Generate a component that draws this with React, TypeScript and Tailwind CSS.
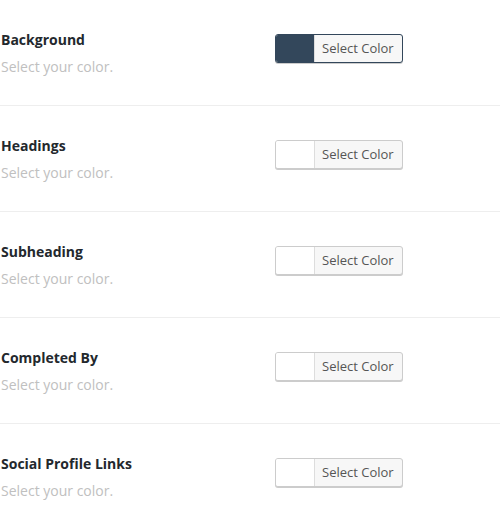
const rows = [
  { label: "Background", color: "#33475b" },
  { label: "Headings", color: "#ffffff" },
  { label: "Subheading", color: "#ffffff" },
  { label: "Completed By", color: "#ffffff" },
  { label: "Social Profile Links", color: "#ffffff" },
];

function ColorButton({ color, active }: { color: string; active?: boolean }) {
  return (
    <button
      className={
        "flex h-[29px] overflow-hidden rounded-[3px] border bg-[#f7f7f7] shadow-[0_1px_0_#cccccc] " +
        (active ? "border-[#33475b]" : "border-[#cccccc]")
      }
    >
      <span className="block h-full w-[38px]" style={{ background: color }} />
      <span className="flex h-full items-center border-l border-[#dddddd] pl-[7px] pr-[8px] text-[13px] text-[#555555]">
        Select Color
      </span>
    </button>
  );
}

export default function App() {
  return (
    <div className="w-[500px] bg-white" style={{ fontFamily: '"Open Sans", "Noto Sans", sans-serif' }}>
      {rows.map((row, i) => (
        <div
          key={row.label}
          className={"flex pt-[30px] pb-[28px] " + (i < rows.length - 1 ? "border-b border-[#eeeeee]" : "")}
        >
          <div className="w-[275px] pl-[1px]">
            <div className="h-[20px] text-[14px] font-bold leading-[20px] text-[#23282d]">{row.label}</div>
            <div className="mt-[7px] h-[20px] text-[14px] leading-[20px] text-[#c0c0c0]">Select your color.</div>
          </div>
          <div className="mt-[4px]">
            <ColorButton color={row.color} active={i === 0} />
          </div>
        </div>
      ))}
    </div>
  );
}
